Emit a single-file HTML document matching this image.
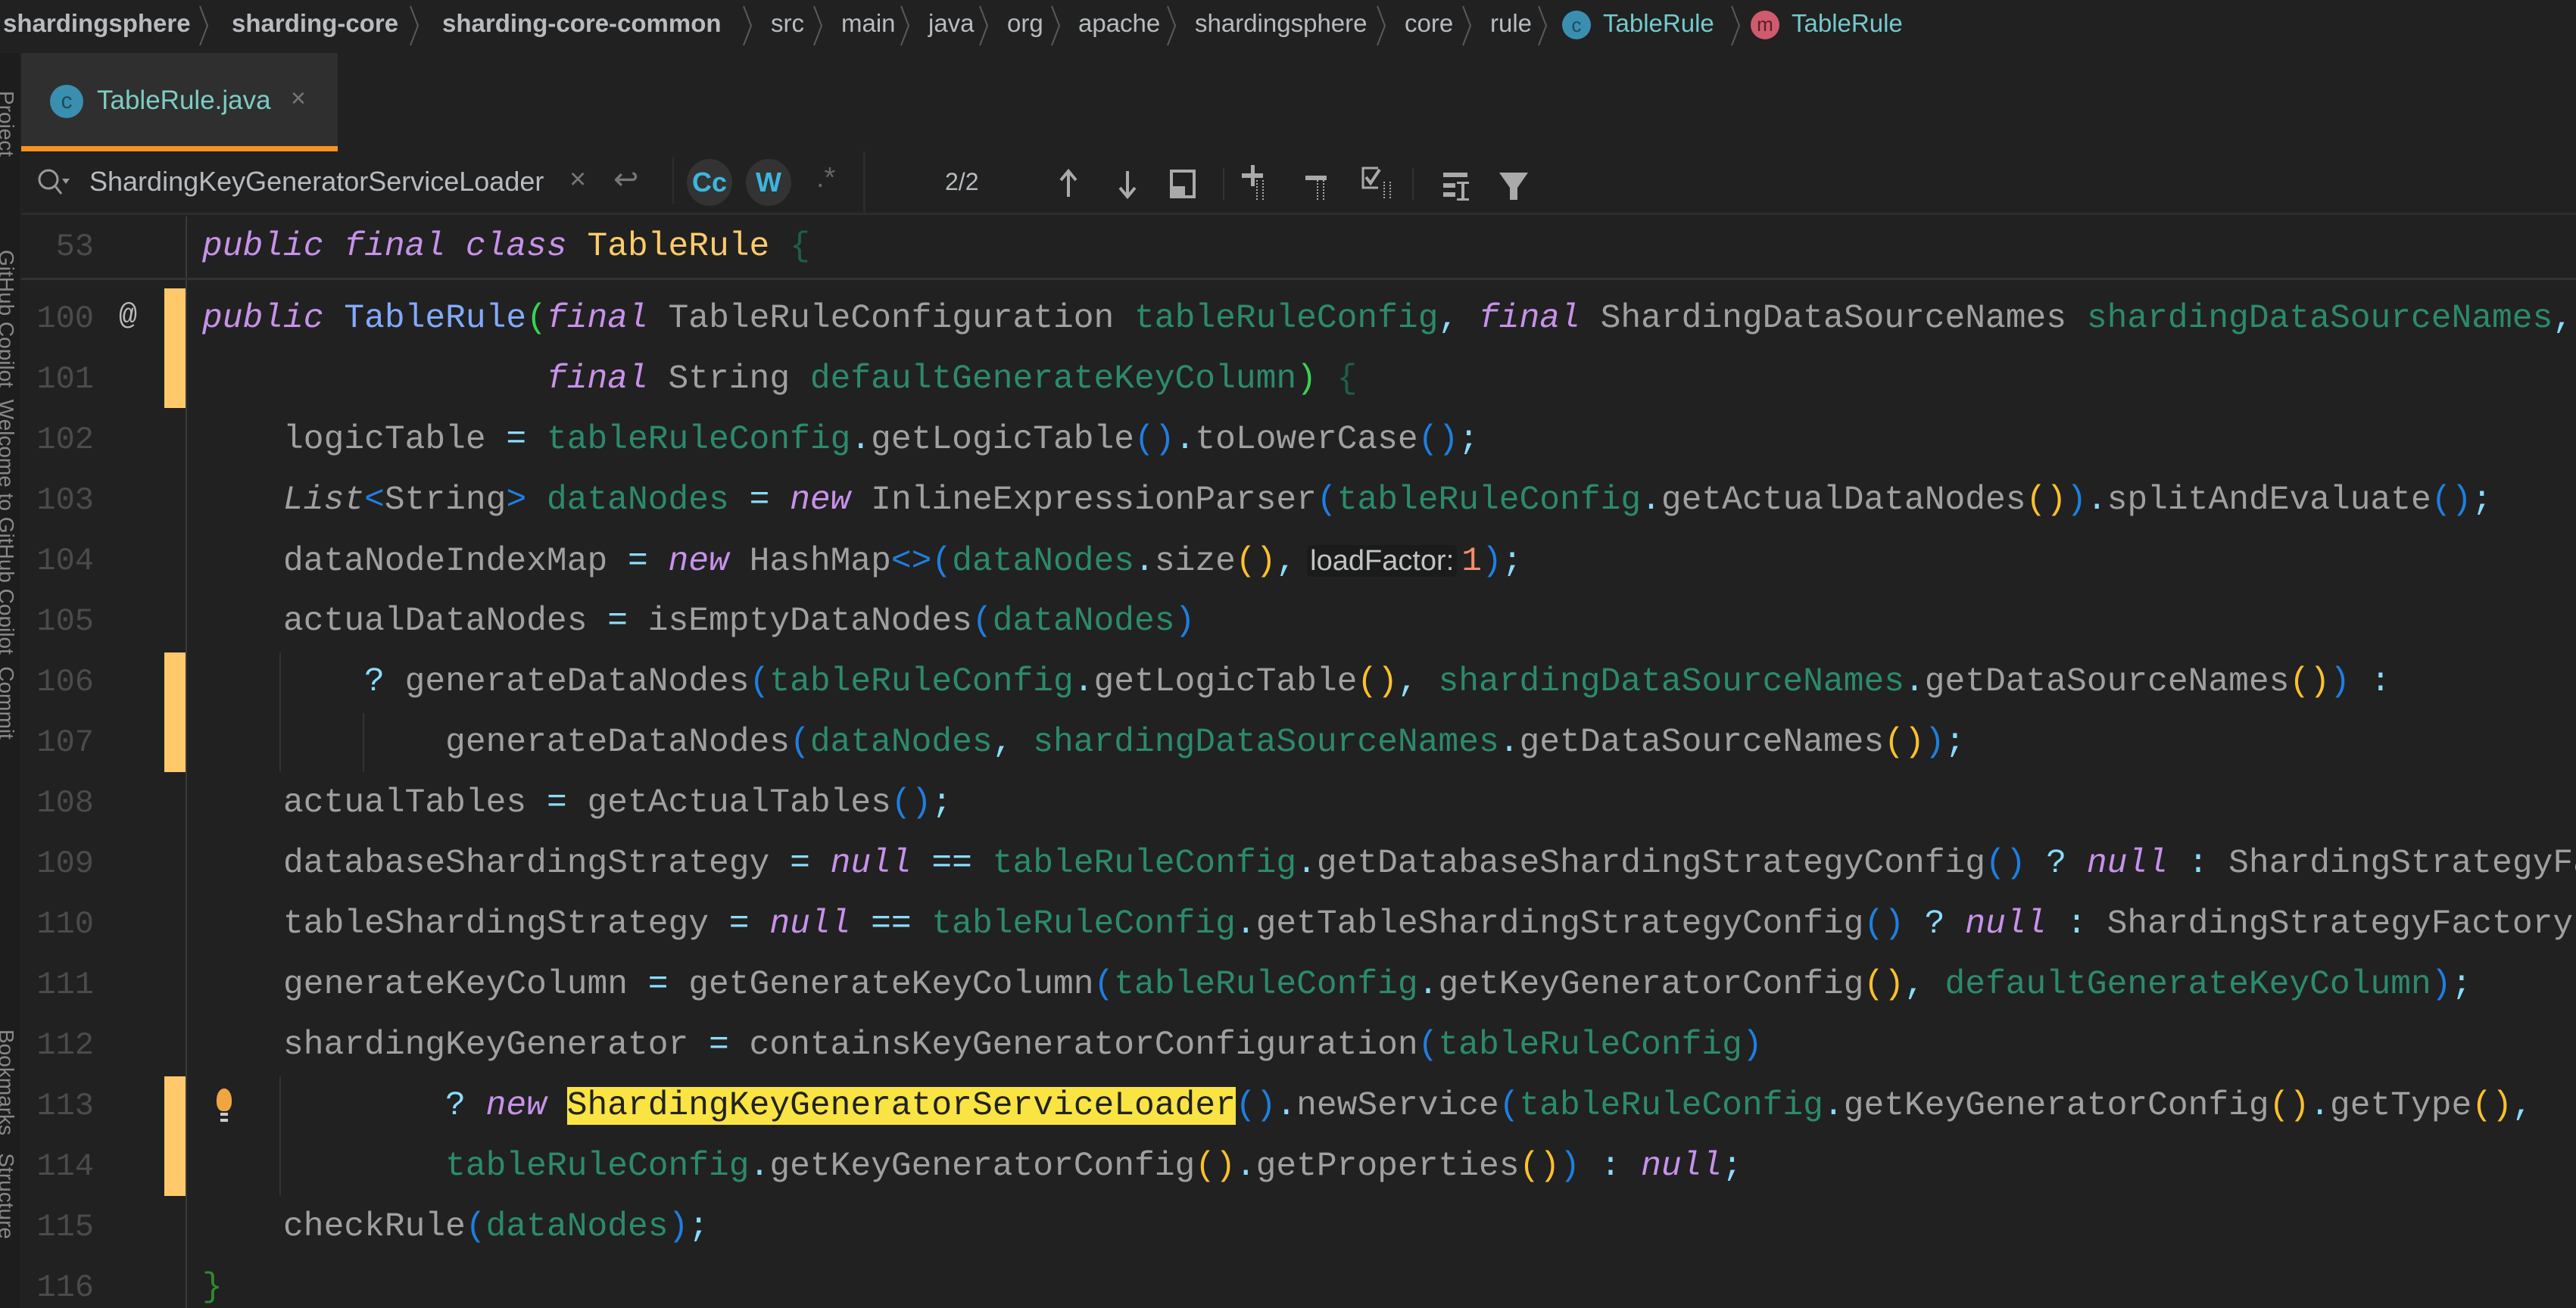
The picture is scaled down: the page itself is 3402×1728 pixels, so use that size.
<!DOCTYPE html>
<html><head><meta charset="utf-8"><style>
*{margin:0;padding:0;box-sizing:border-box}
body{width:3402px;height:1728px;background:#212121;overflow:hidden;position:relative;font-family:"Liberation Sans",sans-serif;color:#a9a9a9}
#clip{position:absolute;left:0;top:0;width:3402px;height:1728px;overflow:hidden}
.a{position:absolute;white-space:pre}
.bc{top:12px;font-size:33px;color:#b8bcbf}
.bc b{font-weight:bold}
.sep{position:absolute;top:6px;width:14px;height:56px}
.code{font-family:"Liberation Mono",monospace;font-size:44.6px;line-height:80px;color:#a0a0a0;left:267px}
.ln{font-family:"Liberation Mono",monospace;font-size:42px;line-height:80px;color:#4b4b4b;width:124px;text-align:right;left:0}
.k{color:#c792ea;font-style:italic}
.f{color:#2c8a6d}
.o{color:#89ddff}
.p1{color:#1e7fe0}
.p2{color:#ffc02e}
.y{color:#ffcb6b}
.m{color:#82aaff}
.n{color:#f78c6c}
.g{color:#39d353}
.hint{font-family:"Liberation Sans",sans-serif;font-size:38px;color:#c0c4c6;background:#1b1b1b;border-radius:6px;padding:0 4px;margin:0 6px 0 14px}
.hl{background:#f9e444;color:#222}
.bar{position:absolute;left:217px;width:28px;background:#ffc96b}
.ig{position:absolute;width:2px;background:#333}
.ico{position:absolute;color:#aaa}
</style></head><body><div id="clip">
<!-- breadcrumb -->
<div class="a bc" style="left:4px"><b>shardingsphere</b></div>
<div class="a bc" style="left:306px"><b>sharding-core</b></div>
<div class="a bc" style="left:584px"><b>sharding-core-common</b></div>
<div class="a bc" style="left:1018px">src</div>
<div class="a bc" style="left:1111px">main</div>
<div class="a bc" style="left:1226px">java</div>
<div class="a bc" style="left:1330px">org</div>
<div class="a bc" style="left:1424px">apache</div>
<div class="a bc" style="left:1578px">shardingsphere</div>
<div class="a bc" style="left:1855px">core</div>
<div class="a bc" style="left:1968px">rule</div>
<svg class="sep" style="left:262px" viewBox="0 0 14 56"><path d="M2 2l10 26-10 26" fill="none" stroke="#5a5a5a" stroke-width="2"/></svg>
<svg class="sep" style="left:540px" viewBox="0 0 14 56"><path d="M2 2l10 26-10 26" fill="none" stroke="#5a5a5a" stroke-width="2"/></svg>
<svg class="sep" style="left:980px" viewBox="0 0 14 56"><path d="M2 2l10 26-10 26" fill="none" stroke="#5a5a5a" stroke-width="2"/></svg>
<svg class="sep" style="left:1073px" viewBox="0 0 14 56"><path d="M2 2l10 26-10 26" fill="none" stroke="#5a5a5a" stroke-width="2"/></svg>
<svg class="sep" style="left:1188px" viewBox="0 0 14 56"><path d="M2 2l10 26-10 26" fill="none" stroke="#5a5a5a" stroke-width="2"/></svg>
<svg class="sep" style="left:1292px" viewBox="0 0 14 56"><path d="M2 2l10 26-10 26" fill="none" stroke="#5a5a5a" stroke-width="2"/></svg>
<svg class="sep" style="left:1387px" viewBox="0 0 14 56"><path d="M2 2l10 26-10 26" fill="none" stroke="#5a5a5a" stroke-width="2"/></svg>
<svg class="sep" style="left:1540px" viewBox="0 0 14 56"><path d="M2 2l10 26-10 26" fill="none" stroke="#5a5a5a" stroke-width="2"/></svg>
<svg class="sep" style="left:1817px" viewBox="0 0 14 56"><path d="M2 2l10 26-10 26" fill="none" stroke="#5a5a5a" stroke-width="2"/></svg>
<svg class="sep" style="left:1930px" viewBox="0 0 14 56"><path d="M2 2l10 26-10 26" fill="none" stroke="#5a5a5a" stroke-width="2"/></svg>
<svg class="sep" style="left:2030px" viewBox="0 0 14 56"><path d="M2 2l10 26-10 26" fill="none" stroke="#5a5a5a" stroke-width="2"/></svg>
<svg class="sep" style="left:2285px" viewBox="0 0 14 56"><path d="M2 2l10 26-10 26" fill="none" stroke="#5a5a5a" stroke-width="2"/></svg>
<div style="position:absolute;left:2063px;top:14px;width:38px;height:38px;border-radius:50%;background:#3a8fb0;color:#1d4b5c;font-size:26px;text-align:center;line-height:38px">c</div>
<div class="a bc" style="left:2117px;color:#74c9cc">TableRule</div>
<div style="position:absolute;left:2312px;top:14px;width:38px;height:38px;border-radius:50%;background:#d05a6e;color:#5a1e28;font-size:26px;text-align:center;line-height:36px">m</div>
<div class="a bc" style="left:2366px;color:#74c9cc">TableRule</div>
<!-- left strip -->
<div style="position:absolute;left:0;top:70px;width:26px;height:1658px;background:#1d1d1d"></div>
<div class="a" style="top:120px;left:24px;font-size:28px;color:#888;transform:rotate(90deg);transform-origin:left top">Project</div>
<div class="a" style="top:330px;left:24px;font-size:28px;color:#888;transform:rotate(90deg);transform-origin:left top">GitHub Copilot  Welcome to GitHub Copilot  Commit</div>
<div class="a" style="top:1360px;left:24px;font-size:28px;color:#888;transform:rotate(90deg);transform-origin:left top">Bookmarks   Structure</div>
<!-- tab -->
<div style="position:absolute;left:28px;top:70px;width:418px;height:128px;background:#2f2f2f"></div>
<div style="position:absolute;left:28px;top:193px;width:418px;height:8px;background:#f7931e"></div>
<div style="position:absolute;left:66px;top:112px;width:44px;height:44px;border-radius:50%;background:#3a8fb0;color:#1d4b5c;font-size:30px;text-align:center;line-height:44px">c</div>
<div class="a" style="left:128px;top:113px;font-size:35px;color:#7ccdc4">TableRule.java</div>
<div class="a" style="left:384px;top:111px;font-size:34px;color:#777">×</div>
<!-- search bar -->
<div style="position:absolute;left:28px;top:200px;width:3374px;height:84px;background:#212121;border-bottom:3px solid #2c2c2c"></div>
<svg class="ico" style="left:48px;top:220px" width="50" height="44" viewBox="0 0 50 44"><circle cx="16" cy="17" r="12" fill="none" stroke="#999" stroke-width="3"/><line x1="25" y1="26" x2="33" y2="36" stroke="#999" stroke-width="3"/><path d="M34 16h10l-5 7z" fill="#999"/></svg>
<div class="a" style="left:118px;top:219px;font-size:36px;color:#b8bcbf">ShardingKeyGeneratorServiceLoader</div>
<div class="a" style="left:752px;top:216px;font-size:38px;color:#777">×</div>
<div class="a" style="left:810px;top:214px;font-size:40px;color:#777">↩</div>
<div style="position:absolute;left:888px;top:207px;width:2px;height:62px;background:#2e2e2e"></div>
<div style="position:absolute;left:907px;top:210px;width:60px;height:62px;border-radius:50%;background:#333;color:#3cb6e0;font-size:36px;font-weight:bold;text-align:center;line-height:62px">Cc</div>
<div style="position:absolute;left:985px;top:210px;width:60px;height:62px;border-radius:50%;background:#333;color:#3cb6e0;font-size:36px;font-weight:bold;text-align:center;line-height:62px">W</div>
<div class="a" style="left:1078px;top:214px;font-size:38px;color:#666">.*</div>
<div style="position:absolute;left:1140px;top:200px;width:3px;height:84px;background:#2c2c2c"></div>
<div class="a" style="left:1248px;top:222px;font-size:32px;color:#b8bcbf">2/2</div>
<svg class="ico" style="left:1390px;top:218px" width="240" height="50" viewBox="0 0 240 50"><g fill="none" stroke="#aaa" stroke-width="4"><path d="M21 42V8M11 20l10-12 10 12"/><path d="M99 8v34M89 30l10 12 10-12"/><rect x="157" y="8" width="30" height="34"/></g><rect x="157" y="28" width="18" height="14" fill="#aaa"/><rect x="225" y="4" width="2" height="42" fill="#333"/></svg>
<svg class="ico" style="left:1640px;top:218px" width="140" height="50" viewBox="0 0 140 50"><g fill="#aaa"><rect x="12" y="0" width="5" height="28"/><rect x="0" y="11" width="28" height="6"/><rect x="84" y="14" width="28" height="6"/></g>
<g fill="none" stroke="#aaa" stroke-width="2" stroke-dasharray="2 2"><path d="M20 20v26M28 20v26M100 20v26M108 20v26"/></g></svg>
<svg class="ico" style="left:1798px;top:218px" width="50" height="50" viewBox="0 0 50 50"><path d="M22 4h-20v26h20" fill="none" stroke="#aaa" stroke-width="3"/><path d="M6 16l6 8 12-18" fill="none" stroke="#aaa" stroke-width="4"/><g fill="none" stroke="#aaa" stroke-width="2" stroke-dasharray="2 2"><path d="M30 22v24M38 22v24"/></g></svg>
<div style="position:absolute;left:1865px;top:222px;width:2px;height:42px;background:#333"></div>
<svg class="ico" style="left:1900px;top:218px" width="120" height="50" viewBox="0 0 120 50"><g fill="#aaa"><rect x="6" y="10" width="32" height="6"/><rect x="6" y="24" width="16" height="6"/><rect x="6" y="36" width="16" height="6"/><rect x="30" y="24" width="4" height="22"/><rect x="24" y="22" width="16" height="3"/><rect x="24" y="44" width="16" height="3"/><path d="M80 10h38l-14 20v16h-10v-16z"/></g></svg>
<!-- gutter -->
<div style="position:absolute;left:245px;top:286px;width:2px;height:1442px;background:#3a3a3a"></div>
<div style="position:absolute;left:28px;top:367px;width:3374px;height:3px;background:#333"></div>
<div class="bar" style="top:381px;height:158px"></div>
<div class="bar" style="top:862px;height:158px"></div>
<div class="bar" style="top:1422px;height:158px"></div>
<div class="a" style="left:157px;top:396px;font-family:'Liberation Mono',monospace;font-size:40px;color:#bbb">@</div>
<div style="position:absolute;left:286px;top:1438px;width:20px;height:30px;border-radius:50% 50% 40% 40%;background:#f0a640"></div>
<div style="position:absolute;left:291px;top:1470px;width:10px;height:4px;background:#ccc"></div>
<div style="position:absolute;left:291px;top:1478px;width:10px;height:4px;background:#ccc"></div>
<!-- indent guides -->
<div class="ig" style="left:369px;top:862px;height:158px"></div>
<div class="ig" style="left:479px;top:942px;height:78px"></div>
<div class="ig" style="left:369px;top:1422px;height:158px"></div>
<!-- line numbers -->
<div class="a ln" style="top:286px">53</div>
<div class="a ln" style="top:381px">100</div>
<div class="a ln" style="top:461px">101</div>
<div class="a ln" style="top:541px">102</div>
<div class="a ln" style="top:621px">103</div>
<div class="a ln" style="top:701px">104</div>
<div class="a ln" style="top:781px">105</div>
<div class="a ln" style="top:861px">106</div>
<div class="a ln" style="top:941px">107</div>
<div class="a ln" style="top:1021px">108</div>
<div class="a ln" style="top:1101px">109</div>
<div class="a ln" style="top:1181px">110</div>
<div class="a ln" style="top:1261px">111</div>
<div class="a ln" style="top:1341px">112</div>
<div class="a ln" style="top:1421px">113</div>
<div class="a ln" style="top:1501px">114</div>
<div class="a ln" style="top:1581px">115</div>
<div class="a ln" style="top:1661px">116</div>
<!-- code -->
<div class="a code" style="top:286px"><span class="k">public final class</span> <span class="y">TableRule</span> <span style="color:#1e5e4a">{</span></div>
<div class="a code" style="top:381px"><span class="k">public</span> <span class="m">TableRule</span><span class="g">(</span><span class="k">final</span> TableRuleConfiguration <span class="f">tableRuleConfig</span><span class="o">,</span> <span class="k">final</span> ShardingDataSourceNames <span class="f">shardingDataSourceNames</span><span class="o">,</span></div>
<div class="a code" style="top:461px">                 <span class="k">final</span> String <span class="f">defaultGenerateKeyColumn</span><span class="g">)</span> <span style="color:#1e5e4a">{</span></div>
<div class="a code" style="top:541px">    logicTable <span class="o">=</span> <span class="f">tableRuleConfig</span><span class="o">.</span>getLogicTable<span class="p1">()</span><span class="o">.</span>toLowerCase<span class="p1">()</span><span class="o">;</span></div>
<div class="a code" style="top:621px">    <span style="font-style:italic">List</span><span class="p1">&lt;</span>String<span class="p1">&gt;</span> <span class="f">dataNodes</span> <span class="o">=</span> <span class="k">new</span> InlineExpressionParser<span class="p1">(</span><span class="f">tableRuleConfig</span><span class="o">.</span>getActualDataNodes<span class="p2">()</span><span class="p1">)</span><span class="o">.</span>splitAndEvaluate<span class="p1">()</span><span class="o">;</span></div>
<div class="a code" style="top:701px">    dataNodeIndexMap <span class="o">=</span> <span class="k">new</span> HashMap<span class="p1">&lt;&gt;(</span><span class="f">dataNodes</span><span class="o">.</span>size<span class="p2">()</span><span class="o">,</span><span class="hint">loadFactor:</span><span class="n">1</span><span class="p1">)</span><span class="o">;</span></div>
<div class="a code" style="top:781px">    actualDataNodes <span class="o">=</span> isEmptyDataNodes<span class="p1">(</span><span class="f">dataNodes</span><span class="p1">)</span></div>
<div class="a code" style="top:861px">        <span class="o">?</span> generateDataNodes<span class="p1">(</span><span class="f">tableRuleConfig</span><span class="o">.</span>getLogicTable<span class="p2">()</span><span class="o">,</span> <span class="f">shardingDataSourceNames</span><span class="o">.</span>getDataSourceNames<span class="p2">()</span><span class="p1">)</span> <span class="o">:</span></div>
<div class="a code" style="top:941px">            generateDataNodes<span class="p1">(</span><span class="f">dataNodes</span><span class="o">,</span> <span class="f">shardingDataSourceNames</span><span class="o">.</span>getDataSourceNames<span class="p2">()</span><span class="p1">)</span><span class="o">;</span></div>
<div class="a code" style="top:1021px">    actualTables <span class="o">=</span> getActualTables<span class="p1">()</span><span class="o">;</span></div>
<div class="a code" style="top:1101px">    databaseShardingStrategy <span class="o">=</span> <span class="k">null</span> <span class="o">==</span> <span class="f">tableRuleConfig</span><span class="o">.</span>getDatabaseShardingStrategyConfig<span class="p1">()</span> <span class="o">?</span> <span class="k">null</span> <span class="o">:</span> ShardingStrategyFactory</div>
<div class="a code" style="top:1181px">    tableShardingStrategy <span class="o">=</span> <span class="k">null</span> <span class="o">==</span> <span class="f">tableRuleConfig</span><span class="o">.</span>getTableShardingStrategyConfig<span class="p1">()</span> <span class="o">?</span> <span class="k">null</span> <span class="o">:</span> ShardingStrategyFactory</div>
<div class="a code" style="top:1261px">    generateKeyColumn <span class="o">=</span> getGenerateKeyColumn<span class="p1">(</span><span class="f">tableRuleConfig</span><span class="o">.</span>getKeyGeneratorConfig<span class="p2">()</span><span class="o">,</span> <span class="f">defaultGenerateKeyColumn</span><span class="p1">)</span><span class="o">;</span></div>
<div class="a code" style="top:1341px">    shardingKeyGenerator <span class="o">=</span> containsKeyGeneratorConfiguration<span class="p1">(</span><span class="f">tableRuleConfig</span><span class="p1">)</span></div>
<div class="a code" style="top:1421px">            <span class="o">?</span> <span class="k">new</span> <span class="hl">ShardingKeyGeneratorServiceLoader</span><span class="p1">()</span><span class="o">.</span>newService<span class="p1">(</span><span class="f">tableRuleConfig</span><span class="o">.</span>getKeyGeneratorConfig<span class="p2">()</span><span class="o">.</span>getType<span class="p2">()</span><span class="o">,</span></div>
<div class="a code" style="top:1501px">            <span class="f">tableRuleConfig</span><span class="o">.</span>getKeyGeneratorConfig<span class="p2">()</span><span class="o">.</span>getProperties<span class="p2">()</span><span class="p1">)</span> <span class="o">:</span> <span class="k">null</span><span class="o">;</span></div>
<div class="a code" style="top:1581px">    checkRule<span class="p1">(</span><span class="f">dataNodes</span><span class="p1">)</span><span class="o">;</span></div>
<div class="a code" style="top:1661px"><span style="color:#2f8a2f">}</span></div>
</div></body></html>
